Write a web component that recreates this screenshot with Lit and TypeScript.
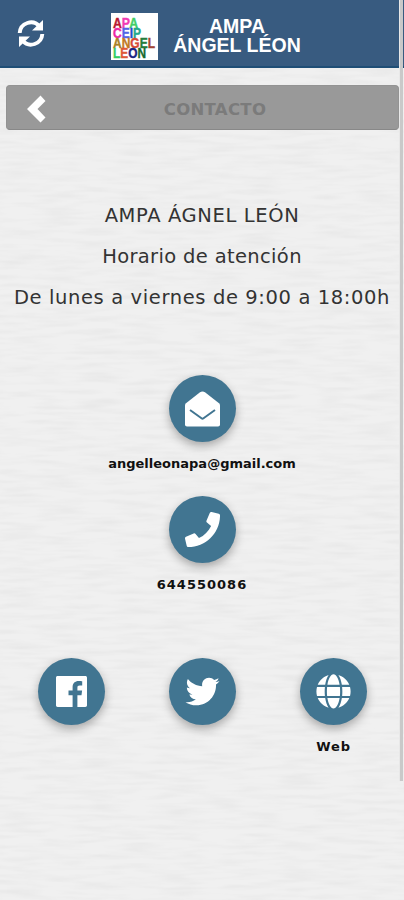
import { LitElement, html, css, svg } from "lit";
import { customElement } from "lit/decorators.js";

const icons: Record<string, unknown> = {
  mail: svg`<path fill="#fff" d="M2 35.500h31c1.200 0 2-.8 2-2V14.200c0-.8-.4-1.500-1-2L20 1.300c-1.500-1.100-3.500-1.100-5 0L1 12.200c-.6.500-1 1.200-1 2v19.300c0 1.200.8 2 2 2z"/><path fill="none" stroke="#417591" stroke-width="2" stroke-linejoin="round" d="M5 19 16.500 27.300q1 .7 2 0L30 19"/>`,
  phone: svg`<path fill="#fff" transform="scale(.0684)" d="M493.4 24.6l-104-24c-11.3-2.6-22.9 3.3-27.5 13.9l-48 112c-4.2 9.8-1.4 21.3 6.9 28l60.6 49.6c-36 76.7-98.9 140.5-177.2 177.2l-49.6-60.6c-6.8-8.3-18.2-11.1-28-6.9l-112 48C3.9 366.5-2 378.1.6 389.4l24 104C27.1 504.2 36.7 512 48 512c256.1 0 464-207.5 464-464 0-11.2-7.7-20.9-18.6-23.4z"/>`,
  facebook: svg`<path fill="#fff" d="M3.700 2h27.600c1 0 1.700.7 1.700 1.700v27.600c0 1-.7 1.700-1.700 1.700H23.400V21.200h4.100l.6-4.600h-4.700v-2.800c0-1.400.5-2.300 2.300-2.300h2.500V7.300c-.5 0-1.900-.2-3.600-.2-3.600 0-6 2.200-6 6.100v3.400h-4.100v4.600h4.100V33H3.700C2.700 33 2 32.300 2 31.300V3.700C2 2.700 2.700 2 3.700 2z"/>`,
  twitter: svg`<path fill="#fff" transform="translate(.5 .5) scale(.0664)" d="M459.37 151.716c.325 4.548.325 9.097.325 13.645 0 138.72-105.583 298.558-298.558 298.558-59.452 0-114.680-17.219-161.137-47.106 8.447.974 16.568 1.299 25.340 1.299 49.055 0 94.213-16.568 130.274-44.832-46.132-.975-84.792-31.188-98.112-72.772 6.498.974 12.995 1.624 19.818 1.624 9.421 0 18.843-1.300 27.614-3.573-48.081-9.747-84.143-51.980-84.143-102.985v-1.299c13.969 7.797 30.214 12.670 47.431 13.319-28.264-18.843-46.781-51.005-46.781-87.391 0-19.492 5.197-37.360 14.294-52.954 51.655 63.675 129.300 105.258 216.365 109.807-1.624-7.797-2.599-15.918-2.599-24.040 0-57.828 46.782-104.934 104.934-104.934 30.213 0 57.502 12.670 76.670 33.137 23.715-4.548 46.456-13.320 66.599-25.340-7.798 24.366-24.366 44.833-46.132 57.827 21.117-2.273 41.584-8.122 60.426-16.243-14.292 20.791-32.161 39.308-52.628 54.253z"/>`,
  globe: svg`<path fill="#fff" transform="translate(.4 -.2) scale(.069)" d="M336.5 160C322 70.7 287.8 8 248 8s-74 62.7-88.5 152h177zM152 256c0 22.2 1.2 43.5 3.3 64h185.3c2.100-20.500 3.300-41.800 3.300-64s-1.200-43.500-3.300-64H155.300c-2.100 20.500-3.300 41.800-3.300 64zm324.700-96c-28.600-67.900-86.500-120.400-158-141.600 24.400 33.800 41.200 84.700 50 141.600h108zM177.200 18.400C105.800 39.600 47.800 92.100 19.300 160h108c8.700-56.900 25.500-107.800 49.900-141.600zM487.400 192H372.700c2.100 21 3.300 42.500 3.300 64s-1.200 43-3.300 64h114.600c5.500-20.500 8.600-41.800 8.600-64s-3.100-43.500-8.500-64zM120 256c0-21.500 1.200-43 3.300-64H8.600C3.200 212.500 0 233.800 0 256s3.200 43.500 8.600 64h114.600c-2-21-3.200-42.500-3.200-64zm39.500 96c14.500 89.300 48.700 152 88.500 152s74-62.700 88.500-152h-177zm159.300 141.600c71.400-21.200 129.400-73.700 158-141.600h-108c-8.800 56.900-25.600 107.800-50 141.600zM19.300 352c28.600 67.900 86.500 120.400 158 141.600-24.400-33.800-41.200-84.700-50-141.600h-108z"/>`,
};

const logoRows = [
  [["A", "#b91830"], ["P", "#f13bb4"], ["A", "#42ce68"]],
  [["C", "#ed26a5"], ["E", "#5464e6"], ["I", "#1c4ccc"], ["P", "#25a98d"]],
  [["A", "#aa8126"], ["N", "#c17a24"], ["G", "#d84a34"], ["E", "#277d3c"], ["L", "#a14436"]],
  [["L", "#32ce64"], ["E", "#df5938"], ["O", "#1b2581"], ["N", "#176b30"]],
];
const logoWidths = [25, 28, 42, 33];

@customElement("contact-button")
class ContactButton extends LitElement {
  static properties = { icon: {}, label: {} };
  declare icon: string;
  declare label: string;
  static styles = css`
    :host { display: flex; flex-direction: column; align-items: center; width: 131px; }
    .disc { width: 67px; height: 67px; border-radius: 50%; background: #417591; display: grid; place-items: center; box-shadow: 0 4px 10px rgba(0,0,0,.3); }
    svg { width: 35px; height: 36px; display: block; overflow: hidden; }
    .label { margin-top: 13px; height: 17px; font: bold 13px/17px "DejaVu Sans", sans-serif; letter-spacing: var(--tracking, 0); color: #111; white-space: nowrap; }
  `;
  render() {
    return html`<div class="disc"><svg viewBox="0 0 35 36">${icons[this.icon]}</svg></div>
      <div class="label">${this.label}</div>`;
  }
}

@customElement("app-root")
class AppRoot extends LitElement {
  static styles = css`
    :host { display: block; position: relative; width: 404px; height: 900px; overflow: hidden; background: #f0f0f0; font-family: "DejaVu Sans", sans-serif; }
    .paper { position: absolute; inset: 0; width: 404px; height: 900px; }
    .page { position: relative; }
    header { height: 68px; box-sizing: border-box; background: #385b80; border-bottom: 2px solid #1f4e76; display: flex; align-items: center; }
    .sync { width: 28px; height: 28px; margin-left: 17px; }
    .logo { width: 47px; height: 47px; margin: 7px 0 0 66px; background: #fff; }
    h1 { margin: 5px 0 0 14px; width: 130px; text-align: center; color: #fff; font: bold 19.500px/19px "Liberation Sans", sans-serif; white-space: nowrap; }
    .h1line { display: block; }
    .bar { margin: 17px 5px 0 6px; height: 45px; box-sizing: border-box; border-radius: 4px; background: #999; border: 1px solid #939393; border-bottom-color: #888; display: flex; align-items: center; }
    .bar svg { width: 22px; height: 28px; margin: 2px 0 0 19px; }
    .bar span { flex: 1; text-align: center; margin: 4px 16px 0 0; font-size: 16.500px; letter-spacing: .3px; font-weight: bold; color: #7b7b7b; }
    .info { margin-top: 65px; text-align: center; color: #333; font-size: 19.500px; line-height: 41px; letter-spacing: .62px; white-space: nowrap; }
    .info p { margin: 0; }
    .hours { letter-spacing: .35px; }
    .stack { margin-top: 57px; display: flex; flex-direction: column; align-items: center; gap: 24px; }
    .phone { --tracking: 1px; }
    .web { --tracking: .9px; }
    .row { margin-top: 65px; display: flex; padding-left: 6px; }
    .scroll { position: absolute; left: 399px; top: 0; width: 3px; height: 781px; background: #c9c9c9; border-left: 1px solid #e8e8e8; }
  `;
  render() {
    return html`
      <svg class="paper"><filter id="grain" x="0" y="0" width="100%" height="100%"><feTurbulence type="fractalNoise" baseFrequency=".025 .2" numOctaves="2" seed="4"/><feColorMatrix values="0 0 0 0 .5  0 0 0 0 .5  0 0 0 0 .5  .3 0 0 0 -.12"/></filter><rect width="404" height="900" filter="url(#grain)"/></svg>
      <div class="page">
        <header>
          <svg class="sync" viewBox="0 0 28 28"><g fill="none" stroke="#fff" stroke-width="3.900"><path d="M2.700 14A11.200 11.200 0 0 1 22.500 7.500"/><path d="M25.300 15A11.200 11.200 0 0 1 5.500 21.500"/></g><path fill="#fff" d="M26 1v10.500h-11zM2 28v-10.500h11z"/></svg>
          <svg class="logo" viewBox="0 0 47 47">${logoRows.map((row, i) => svg`<text x="2" y=${14.500 + i * 10.200} font-family="Liberation Sans, sans-serif" font-size="15" font-weight="bold" textLength=${logoWidths[i]} lengthAdjust="spacingAndGlyphs">${row.map(([c, color]) => svg`<tspan fill=${color} stroke=${color} stroke-width=".4">${c}</tspan>`)}</text>`)}</svg>
          <h1><span class="h1line">AMPA</span><span class="h1line">ÁNGEL LÉON</span></h1>
        </header>
        <div class="bar"><svg viewBox="0 0 22 28"><path fill="#fff" d="M14.500.500 1 14l13.500 13.500 5-5L11.500 14l8-8z"/></svg><span>CONTACTO</span></div>
        <div class="info"><p>AMPA ÁGNEL LEÓN</p><p class="hours">Horario de atención</p><p>De lunes a viernes de 9:00 a 18:00h</p></div>
        <div class="stack">
          <contact-button icon="mail" label="angelleonapa@gmail.com"></contact-button>
          <contact-button class="phone" icon="phone" label="644550086"></contact-button>
        </div>
        <div class="row">
          <contact-button icon="facebook" label=""></contact-button>
          <contact-button icon="twitter" label=""></contact-button>
          <contact-button class="web" icon="globe" label="Web"></contact-button>
        </div>
      </div>
      <div class="scroll"></div>`;
  }
}
